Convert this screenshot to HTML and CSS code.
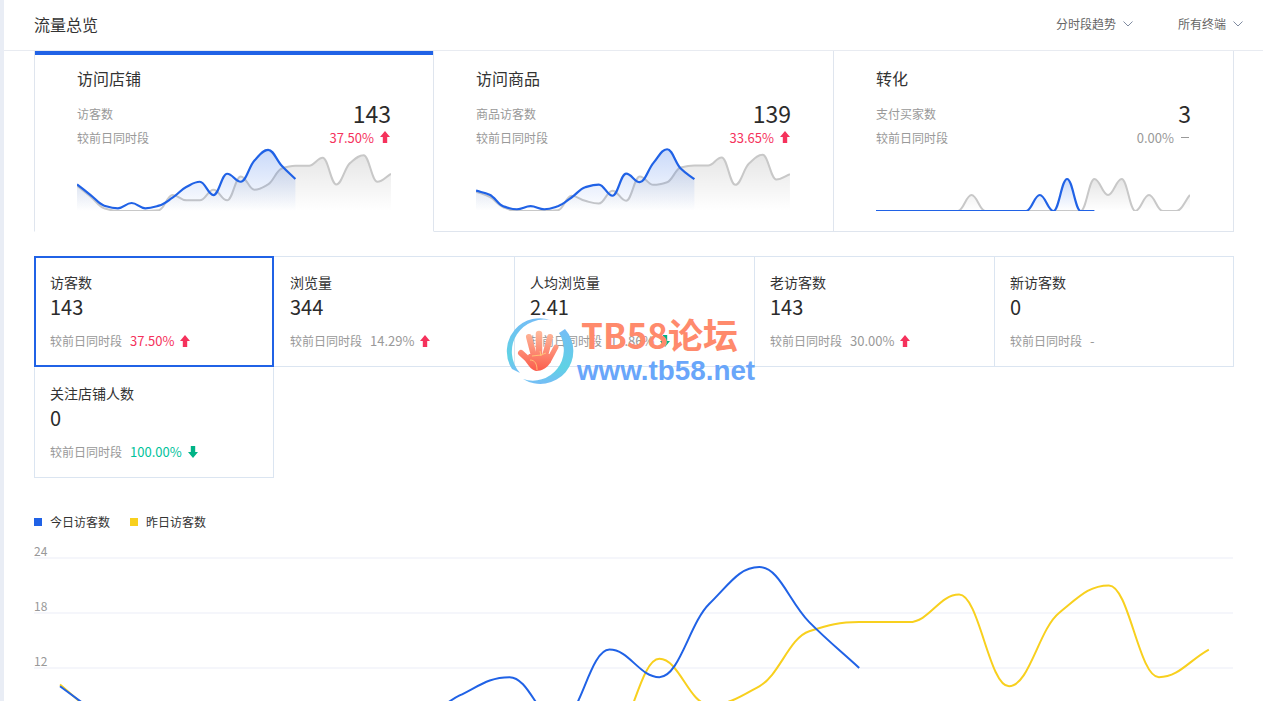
FILE: index.html
```html
<!DOCTYPE html>
<html lang="zh-CN">
<head>
<meta charset="utf-8">
<title>流量总览</title>
<link rel="stylesheet" href="styles.css">
</head>
<body>
<div class="page">
  <header class="topbar">
    <h1 class="topbar-title">流量总览</h1>
    <div class="topbar-filters">
      <span class="filter filter-wide">分时段趋势<svg class="chevron" viewBox="0 0 10 6"><polyline points="0.5,0.5 5,5 9.500,0.5"/></svg></span>
      <span class="filter">所有终端<svg class="chevron" viewBox="0 0 10 6"><polyline points="0.5,0.5 5,5 9.500,0.5"/></svg></span>
    </div>
  </header>

  <main class="content">
    <section class="funnel">
      <article class="funnel-card is-active">
        <h2 class="funnel-title">访问店铺</h2>
        <div class="funnel-row"><span class="muted">访客数</span><span class="funnel-value">143</span></div>
        <div class="funnel-row funnel-row-small"><span class="muted">较前日同时段</span><span class="delta up">37.50%<svg class="arrow" viewBox="0 0 10 12"><path d="M5 0L10 6H7.200V12H2.800V6H0Z"/></svg></span></div>
        <svg class="spark" data-scale="2.66" data-today="10,6,2,1,3,1,2,5,9,11,6,14,11,19,23,17,12" data-yesterday="9.500,5.400,1,0,0,0,0.300,6,4,4,8,4,13,8,10,16,17,17,20,10,18,21,11,14"></svg>
      </article>
      <article class="funnel-card">
        <h2 class="funnel-title">访问商品</h2>
        <div class="funnel-row"><span class="muted">商品访客数</span><span class="funnel-value">139</span></div>
        <div class="funnel-row funnel-row-small"><span class="muted">较前日同时段</span><span class="delta up">33.65%<svg class="arrow" viewBox="0 0 10 12"><path d="M5 0L10 6H7.200V12H2.800V6H0Z"/></svg></span></div>
        <svg class="spark" data-scale="1.017" data-today="20,16,4.700,1.700,4.700,1.700,4.700,13.300,23.300,26,15,36.700,28.300,47.300,60.700,41.700,31.300" data-yesterday="19,14,3.700,0,0,0,0.700,15,10,7.300,20,10,34,25.700,28.300,42.700,44.700,44.700,52.700,25.700,46.700,55.300,31,36.300"></svg>
      </article>
      <article class="funnel-card">
        <h2 class="funnel-title">转化</h2>
        <div class="funnel-row"><span class="muted">支付买家数</span><span class="funnel-value">3</span></div>
        <div class="funnel-row funnel-row-small"><span class="muted">较前日同时段</span><span class="delta flat">0.00%<span class="dash"></span></span></div>
        <svg class="spark" data-scale="16" data-today="0,0,0,0,0,0,0,0,0,0,0,0,1,0,2,0,0" data-yesterday="0,0,0,0,0,0,0,1,0,0,0,0,0,0,0,0,2,1,2,0,1,0,0,1"></svg>
      </article>
    </section>

    <section class="metrics">
      <article class="metric is-active">
        <div class="metric-name">访客数</div>
        <div class="metric-value">143</div>
        <div class="metric-compare"><span class="muted">较前日同时段</span><span class="delta up">37.50%<svg class="arrow" viewBox="0 0 10 12"><path d="M5 0L10 6H7.200V12H2.800V6H0Z"/></svg></span></div>
      </article>
      <article class="metric">
        <div class="metric-name">浏览量</div>
        <div class="metric-value">344</div>
        <div class="metric-compare"><span class="muted">较前日同时段</span><span class="delta plain">14.29%<svg class="arrow arrow-up" viewBox="0 0 10 12"><path d="M5 0L10 6H7.200V12H2.800V6H0Z"/></svg></span></div>
      </article>
      <article class="metric">
        <div class="metric-name">人均浏览量</div>
        <div class="metric-value">2.41</div>
        <div class="metric-compare"><span class="muted">较前日同时段</span><span class="delta plain">11.86%<svg class="arrow arrow-down" viewBox="0 0 10 12"><path d="M5 12L10 6H7.200V0H2.800V6H0Z"/></svg></span></div>
      </article>
      <article class="metric">
        <div class="metric-name">老访客数</div>
        <div class="metric-value">143</div>
        <div class="metric-compare"><span class="muted">较前日同时段</span><span class="delta plain">30.00%<svg class="arrow arrow-up" viewBox="0 0 10 12"><path d="M5 0L10 6H7.200V12H2.800V6H0Z"/></svg></span></div>
      </article>
      <article class="metric">
        <div class="metric-name">新访客数</div>
        <div class="metric-value">0</div>
        <div class="metric-compare"><span class="muted">较前日同时段</span><span class="delta plain">-</span></div>
      </article>
      <article class="metric">
        <div class="metric-name">关注店铺人数</div>
        <div class="metric-value">0</div>
        <div class="metric-compare"><span class="muted">较前日同时段</span><span class="delta down">100.00%<svg class="arrow" viewBox="0 0 10 12"><path d="M5 12L10 6H7.200V0H2.800V6H0Z"/></svg></span></div>
      </article>
    </section>

    <section class="trend">
      <div class="legend">
        <span class="legend-item"><i class="swatch swatch-today"></i>今日访客数</span>
        <span class="legend-item"><i class="swatch swatch-yesterday"></i>昨日访客数</span>
      </div>
      <svg class="trend-chart" id="trend" data-today="10,6,2,1,3,1,2,5,9,11,6,14,11,19,23,17,12" data-yesterday="10.200,5.500,1,0,0,0,0,6,4,4,8,4,13,8,10,16,17,17,20,10,18,21,11,14"></svg>
    </section>
  </main>

  <div class="watermark">
    <svg class="watermark-logo" viewBox="0 0 90 80">
      <defs>
        <linearGradient id="ring" x1="0" y1="0" x2="0" y2="1"><stop offset="0" stop-color="#75bdf6"/><stop offset="0.7" stop-color="#5fd2e4"/><stop offset="1" stop-color="#75bdf6"/></linearGradient>
        <linearGradient id="palm" gradientUnits="userSpaceOnUse" x1="40" y1="20" x2="38" y2="62"><stop offset="0" stop-color="#ffbd9f"/><stop offset="1" stop-color="#fb5a4a"/></linearGradient>
      </defs>
      <path fill="url(#ring)" d="M53 11A33 33 0 0 0 12 59L20 63A32 32 0 0 1 53 11Z"/>
      <path fill="url(#ring)" d="M65 19A33 33 0 0 1 23 69A31 31 0 0 0 59 23Z"/>
      <g stroke="url(#palm)" stroke-linecap="round" fill="none">
        <path stroke-width="6" d="M21 43L33 54"/>
        <path stroke-width="6" d="M29 27L34 46"/>
        <path stroke-width="6.500" d="M39 24L39 45"/>
        <path stroke-width="6" d="M50 27L45 46"/>
        <path stroke-width="5" d="M56 37L49 50"/>
      </g>
      <path fill="url(#palm)" d="M29 44H50L51 52C47 58 42 61 36 61C32 60 28 56 25 50Z"/>
      <path fill="none" stroke="#ffd27a" stroke-width="0.800" d="M32 46L41 45L46 43M30 50C35 50 37 54 37 60M41 46L40 41"/>
    </svg>
    <div class="watermark-text">
      <div class="watermark-name">TB58论坛</div>
      <div class="watermark-url">www.tb58.net</div>
    </div>
  </div>
</div>
<script src="script.js"></script>
</body>
</html>
```
FILE: styles.css
```css
* { box-sizing: border-box; }
html, body { margin: 0; height: 100%; overflow: hidden; background: #fff; }
body {
  font-family: "Noto Sans CJK SC", "Liberation Sans", sans-serif;
  font-size: 12px;
  color: #333;
}
h1, h2 { margin: 0; font-weight: 400; }

.page {
  position: relative;
  height: 100%;
  margin-left: 4px;
  box-shadow: -4px 0 0 #e9edf5;
}

.topbar {
  display: flex;
  align-items: center;
  justify-content: space-between;
  height: 51px;
  padding: 0 20px 2px 30px;
  border-bottom: 1px solid #e8ebf1;
}
.topbar-title { font-size: 16px; line-height: 24px; color: #333; }
.topbar-filters { display: flex; gap: 45px; }
.filter { display: flex; align-items: center; gap: 7px; line-height: 20px; color: #666; }
.chevron { width: 10px; height: 6px; fill: none; stroke: #7f8ba0; stroke-width: 1; }

.content { padding: 0 29px 0 30px; }

.funnel { display: grid; grid-template-columns: repeat(3, 400px); }
.funnel-card {
  height: 181px;
  padding: 15px 42px 0;
  border-right: 1px solid #dfe5ee;
  border-bottom: 1px solid #dfe5ee;
}
.funnel-card.is-active {
  border-left: 1px solid #dfe5ee;
  border-bottom-color: transparent;
  box-shadow: inset 0 4px 0 #2062e6;
}
.funnel-title { font-size: 16px; line-height: 24px; color: #333; }
.funnel-row {
  display: flex;
  align-items: center;
  justify-content: space-between;
  height: 24px;
  margin-top: 11px;
}
.funnel-row-small { height: 20px; margin-top: 2px; }
.funnel-value { font-size: 23px; line-height: 24px; color: #2b2b2b; }
.spark { display: block; width: 314px; height: 63px; margin-top: 1px; overflow: hidden; }

.muted { color: #999; }
.delta { display: inline-flex; align-items: center; font-size: 13px; }
.delta.up { color: #f5325c; }
.delta.down { color: #00c29b; }
.delta.flat, .delta.plain { color: #999; }
.arrow { width: 10px; height: 12px; margin-left: 6px; fill: #f5325c; }
.funnel-row .arrow { margin-right: 1px; }
.delta.down .arrow, .arrow-down { fill: #00b386; }
.dash { width: 8px; height: 1px; margin: 0 2px 0 7px; background: #999; }

.metrics {
  display: grid;
  grid-template-columns: 240px 241px 240px 240px 239px;
  grid-auto-rows: 111px;
  margin-top: 24px;
}
.metric {
  padding: 15px 10px 0 16px;
  border-style: solid;
  border-color: #dbe5f1;
  border-width: 1px 1px 1px 0;
}
.metric:nth-child(5n+1) { border-left-width: 1px; padding-left: 15px; }
.metric:nth-child(n+3):nth-child(-n+5) { padding-left: 15px; }
.metric:nth-child(n+6) { border-top-color: transparent; }
.metric.is-active { border-color: #2062e6; box-shadow: inset 0 0 0 1px #2062e6; }
.metric-name { font-size: 14px; line-height: 20px; color: #333; }
.metric-value { margin-top: 1px; font-size: 20px; line-height: 28px; color: #2b2b2b; }
.metric-compare { display: flex; align-items: center; margin-top: 10px; line-height: 20px; }
.metric-compare .delta { margin-left: 8px; }

.legend { display: flex; gap: 20px; margin-top: 34px; line-height: 20px; color: #333; }
.legend-item { display: inline-flex; align-items: center; }
.swatch { width: 8px; height: 8px; margin-right: 8px; }
.swatch-today { background: #2062e6; }
.swatch-yesterday { background: #f8d01e; }
.trend-chart { display: block; width: 1200px; height: 260px; margin-top: 8px; overflow: hidden; }
.axis-label { font-size: 12px; fill: #999; }
.grid-line { fill: #f5f6fb; }

.watermark {
  position: absolute;
  left: 496px;
  top: 310px;
  display: flex;
  pointer-events: none;
}
.watermark-logo { width: 90px; height: 80px; flex: none; margin-right: -13px; }
.watermark-name {
  font-size: 35px;
  line-height: 40px;
  margin: 4px 0 0 4px;
  font-weight: 700;
  color: #ff8a6c;
  white-space: nowrap;
}
.watermark-url {
  font-family: "Liberation Sans", sans-serif;
  font-size: 27.800px;
  line-height: 30px;
  margin-top: 2px;
  font-weight: 700;
  color: #69a6fa;
  white-space: nowrap;
}
```
FILE: script.js
```js
var SVG_NS = 'http://www.w3.org/2000/svg';

function el(name, attrs, parent) {
  var node = document.createElementNS(SVG_NS, name);
  for (var key in attrs) node.setAttribute(key, attrs[key]);
  parent.appendChild(node);
  return node;
}

function nums(text) {
  return text.split(',').map(Number);
}

function curve(points) {
  var slopes = points.map(function (p, i) {
    var prev = points[i - 1], next = points[i + 1];
    if (!prev) return next[1] - p[1];
    if (!next) return p[1] - prev[1];
    var a = p[1] - prev[1], b = next[1] - p[1];
    return a * b <= 0 ? 0 : 2 * a * b / (a + b);
  });
  var d = 'M' + points[0][0] + ' ' + points[0][1];
  for (var i = 1; i < points.length; i++) {
    var p = points[i - 1], q = points[i], k = 0.4, dx = q[0] - p[0];
    d += 'C' + (p[0] + dx * k) + ' ' + (p[1] + slopes[i - 1] * k) + ' ' +
      (q[0] - dx * k) + ' ' + (q[1] - slopes[i] * k) + ' ' + q[0] + ' ' + q[1];
  }
  return d;
}

function gradient(defs, id, color, alpha) {
  var g = el('linearGradient', { id: id, x1: 0, y1: 0, x2: 0, y2: 1 }, defs);
  el('stop', { offset: 0, 'stop-color': color, 'stop-opacity': alpha }, g);
  el('stop', { offset: 1, 'stop-color': color, 'stop-opacity': 0 }, g);
}

document.querySelectorAll('.spark').forEach(function (svg, n) {
  var base = 63, step = 13.65, scale = Number(svg.dataset.scale);
  svg.setAttribute('viewBox', '0 0 314 63');
  var defs = el('defs', {}, svg);
  gradient(defs, 'gray' + n, '#000', 0.1);
  gradient(defs, 'blue' + n, '#2062e6', 0.24);
  function pts(list) {
    return list.map(function (v, i) { return [i * step, base - v * scale]; });
  }
  function draw(list, fill, stroke, width) {
    var p = pts(list), d = curve(p), last = p[p.length - 1][0];
    el('path', { d: d + 'L' + last + ' ' + base + 'L0 ' + base + 'Z', fill: fill }, svg);
    el('path', { d: d, fill: 'none', stroke: stroke, 'stroke-width': width }, svg);
  }
  draw(nums(svg.dataset.yesterday), 'url(#gray' + n + ')', '#c8c8c8', 2);
  draw(nums(svg.dataset.today), 'url(#blue' + n + ')', '#2062e6', 2.2);
});

(function () {
  var svg = document.getElementById('trend');
  svg.setAttribute('viewBox', '0 0 1200 260');
  [24, 18, 12].forEach(function (v, i) {
    var y = 17 + i * 55;
    el('rect', { class: 'grid-line', x: 0, y: y, width: 1199, height: 2 }, svg);
    el('text', { class: 'axis-label', x: 0, y: y - 1 }, svg).textContent = v;
  });
  function line(list, color) {
    var p = list.map(function (v, i) { return [26 + i * 49.95, 238 - v * 9.17]; });
    el('path', { d: curve(p), fill: 'none', stroke: color, 'stroke-width': 2 }, svg);
  }
  line(nums(svg.dataset.yesterday), '#f8d01e');
  line(nums(svg.dataset.today), '#2062e6');
})();
```
